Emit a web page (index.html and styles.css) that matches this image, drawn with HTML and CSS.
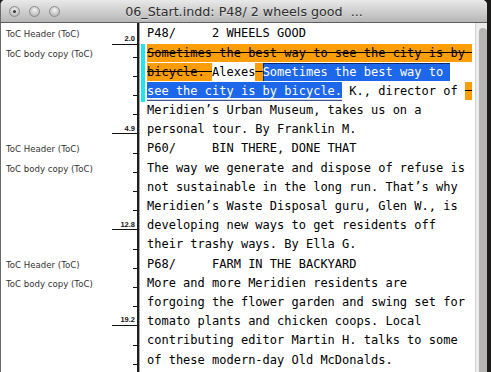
FILE: index.html
```html
<!DOCTYPE html>
<html>
<head>
<meta charset="utf-8">
<title>06_Start.indd</title>
<link rel="stylesheet" href="styles.css">
</head>
<body>
<div class="window">
  <div class="titlebar">
    <div class="lights"><span class="light modified"></span><span class="light"></span><span class="light"></span></div>
    <div class="title">06_Start.indd: P48/ 2 wheels good  ...</div>
    <div></div>
  </div>
  <div class="content">
    <div class="styles">
      <div class="srow"><span class="sname">ToC Header (ToC)</span><span class="ruler"><span class="mark first"><span class="depth">2.0</span></span></span></div>
      <div class="srow"><span class="sname">ToC body copy (ToC)</span><span class="ruler"><span class="tick"></span></span></div>
      <div class="srow"><span class="sname"></span><span class="ruler"><span class="tick"></span></span></div>
      <div class="srow"><span class="sname"></span><span class="ruler"><span class="tick"></span></span></div>
      <div class="srow"><span class="sname"></span><span class="ruler"><span class="tick"></span></span></div>
      <div class="srow"><span class="sname"></span><span class="ruler"><span class="mark"><span class="depth">4.9</span></span></span></div>
      <div class="srow"><span class="sname">ToC Header (ToC)</span><span class="ruler"><span class="tick"></span></span></div>
      <div class="srow"><span class="sname">ToC body copy (ToC)</span><span class="ruler"><span class="tick"></span></span></div>
      <div class="srow"><span class="sname"></span><span class="ruler"><span class="tick"></span></span></div>
      <div class="srow"><span class="sname"></span><span class="ruler"><span class="tick"></span></span></div>
      <div class="srow"><span class="sname"></span><span class="ruler"><span class="mark"><span class="depth">12.8</span></span></span></div>
      <div class="srow"><span class="sname"></span><span class="ruler"><span class="tick"></span></span></div>
      <div class="srow"><span class="sname">ToC Header (ToC)</span><span class="ruler"><span class="tick"></span></span></div>
      <div class="srow"><span class="sname">ToC body copy (ToC)</span><span class="ruler"><span class="tick"></span></span></div>
      <div class="srow"><span class="sname"></span><span class="ruler"><span class="tick"></span></span></div>
      <div class="srow"><span class="sname"></span><span class="ruler"><span class="mark"><span class="depth">19.2</span></span></span></div>
      <div class="srow"><span class="sname"></span><span class="ruler"><span class="tick"></span></span></div>
      <div class="srow"><span class="sname"></span><span class="ruler"><span class="tick"></span></span></div>
    </div>
    <div class="divider"></div>
    <div class="gutter"><div class="changebar"></div></div>
    <div class="story">
      <div class="line">P48/     2 WHEELS GOOD</div>
      <div class="line"><span class="del">Sometimes the best way to see the city is by </span></div>
      <div class="line"><span class="del">bicycle. </span>Alexes<span class="del"> </span><span class="sel sel-top">Sometimes the best way to </span></div>
      <div class="line"><span class="sel sel-bottom">see the city is by bicycle.</span> K., director of <span class="del"> </span></div>
      <div class="line">Meridien’s Urban Museum, takes us on a</div>
      <div class="line">personal tour. By Franklin M.</div>
      <div class="line">P60/     BIN THERE, DONE THAT</div>
      <div class="line">The way we generate and dispose of refuse is</div>
      <div class="line">not sustainable in the long run. That’s why</div>
      <div class="line">Meridien’s Waste Disposal guru, Glen W., is</div>
      <div class="line">developing new ways to get residents off</div>
      <div class="line">their trashy ways. By Ella G.</div>
      <div class="line">P68/     FARM IN THE BACKYARD</div>
      <div class="line">More and more Meridien residents are</div>
      <div class="line">forgoing the flower garden and swing set for</div>
      <div class="line">tomato plants and chicken coops. Local</div>
      <div class="line">contributing editor Martin H. talks to some</div>
      <div class="line">of these modern-day Old McDonalds.</div>
    </div>
    <div class="scrollbar"><div class="thumb"></div></div>
  </div>
</div>
</body>
</html>
```
FILE: styles.css
```css
html, body {
  margin: 0;
  height: 100%;
}
body {
  background: #1d1b19;
  overflow: hidden;
}
.window {
  width: 487px;
  height: 372px;
  box-sizing: border-box;
  background: #fff;
  border-left: 1px solid #6a6a6a;
  border-radius: 5px 5px 0 0;
  overflow: hidden;
  display: flex;
  flex-direction: column;
}
.titlebar {
  height: 22px;
  flex: none;
  display: grid;
  grid-template-columns: 1fr auto 1fr;
  align-items: center;
  background: linear-gradient(#e9e9e9, #b6b6b6);
  border-bottom: 1px solid #5e5e5e;
}
.lights {
  display: flex;
  gap: 9px;
  padding-left: 8px;
  margin-top: 1px;
}
.light {
  width: 11px;
  height: 11px;
  box-sizing: border-box;
  border-radius: 50%;
  border: 1px solid #8a8a8a;
  background: radial-gradient(circle at 50% 35%, #f4f4f4, #c6c6c6 60%, #a8a8a8);
  display: flex;
  align-items: center;
  justify-content: center;
}
.light.modified::after {
  content: "";
  width: 3px;
  height: 3px;
  border-radius: 50%;
  background: #333;
}
.title {
  font: 12.7px/20px "DejaVu Sans", sans-serif;
  color: #2e2e2e;
  white-space: pre;
  padding-top: 2px;
  text-shadow: 0 1px 0 rgba(255, 255, 255, 0.45);
}
.content {
  flex: 1;
  min-height: 0;
  display: flex;
}
.styles {
  width: 136px;
  flex: none;
  padding-top: 1.35px;
}
.srow {
  height: 19.2px;
  display: flex;
}
.sname {
  flex: 1;
  padding-left: 5px;
  padding-top: 1px;
  font: 8.6px/19.2px "DejaVu Sans", sans-serif;
  color: #333;
  white-space: nowrap;
}
.ruler {
  width: 25px;
  flex: none;
  display: flex;
  flex-direction: column;
  align-items: flex-end;
}
.tick {
  width: 4px;
  height: 1px;
  background: #111;
  margin-top: 13.3px;
}
.mark {
  align-self: stretch;
  margin-top: 4.3px;
  border-bottom: 1px solid #111;
}
.mark.first {
  margin-top: 10.6px;
}
.depth {
  display: block;
  font: bold 7.5px/7.5px "Liberation Sans", sans-serif;
  text-align: right;
  padding-right: 2px;
  margin-bottom: 1.3px;
  color: #111;
}
.divider {
  width: 1px;
  flex: none;
  border-left: 2px solid #1f1f1f;
  background: #a3a3a3;
}
.gutter {
  width: 7px;
  flex: none;
}
.changebar {
  margin-left: 1px;
  margin-top: 21px;
  width: 4px;
  height: 58.3px;
  background: #22e6ee;
}
.story {
  flex: 1;
  min-width: 0;
  overflow: hidden;
  padding-top: 1.35px;
  font: 12px/19.2px "DejaVu Sans Mono", monospace;
  color: #000;
}
.line {
  height: 19.2px;
  white-space: pre;
}
.del {
  background: #fd9d08;
  text-decoration: line-through;
  text-decoration-color: #000;
  padding: 1.6px 0 2.3px;
}
.sel {
  background: #1c67ea;
  color: #fff;
  padding: 1.6px 0 2.3px;
}
.sel-top {
  box-shadow: inset 1px 1px 0 #0d2a6e;
}
.sel-bottom {
  padding-bottom: 0;
  box-shadow: 0 1.8px 0 #fff, 0 2.8px 0 #0d2a6e;
}
.scrollbar {
  width: 12px;
  flex: none;
  box-sizing: border-box;
  background: #ececec;
  border-left: 1px solid #d2d2d2;
  overflow: hidden;
}
.thumb {
  margin: 5px 0 0 2.5px;
  width: 8px;
  height: 400px;
  border-radius: 4px;
  background: #b4b4b4;
}
```
